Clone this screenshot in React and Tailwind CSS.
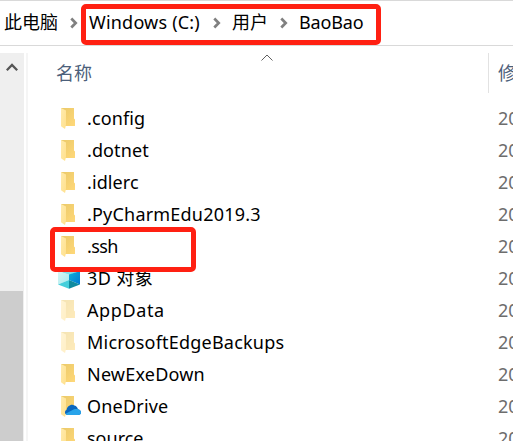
const FONT = "font-['Noto_Sans','Noto_Sans_CJK_SC',sans-serif]";

function Folder({ faded, cloud }) {
  return (
    <svg width="24" height="24" viewBox="0 0 24 24" className="shrink-0">
      <defs>
        <linearGradient id="back" x1="0" y1="0" x2="1" y2="1">
          <stop offset="0" stopColor="#eac969" />
          <stop offset="1" stopColor="#ffd879" />
        </linearGradient>
        <linearGradient id="front" x1="0" y1="0" x2="1" y2="1">
          <stop offset="0" stopColor="#ffebae" />
          <stop offset="1" stopColor="#ffe08c" />
        </linearGradient>
      </defs>
      <g opacity={faded ? 0.5 : 1}>
        <path d="M4 2H17V12.5L18 13.5V20H8L4 18Z" fill="url(#back)" />
        <path d="M4 2L9 4.5V19L8 23L4 20.3Z" fill="url(#front)" />
      </g>
      {cloud && (
        <g>
          <path d="M9.5 16C10 12.5 14 9.5 17.5 11.5C19.5 12 20.5 13.5 21 15.3C23 15.7 24 17 24 18.5C24 20 23 21 21 21H11C9 21 8 19.8 8 18.5C8 17.2 8.6 16.3 9.5 16Z" fill="#0a67bf" />
          <path d="M8.6 19.8L17 15.3C18.5 14.7 20 14.8 21 15.3C23 15.7 24 17 24 18.5C24 20 23 21 21 21H11C9.9 21 9.1 20.6 8.6 19.8Z" fill="#28a4ea" />
        </g>
      )}
    </svg>
  );
}

function Cube() {
  return (
    <svg width="24" height="24" viewBox="0 0 24 24" className="shrink-0">
      <defs>
        <linearGradient id="cubeRight" x1="0" y1="0" x2="1" y2="1">
          <stop offset="0" stopColor="#0fb2d8" />
          <stop offset="1" stopColor="#0078d4" />
        </linearGradient>
        <linearGradient id="cubeLeft" x1="0" y1="0" x2="1" y2="1">
          <stop offset="0" stopColor="#d8f7f5" />
          <stop offset="1" stopColor="#a5e9ee" />
        </linearGradient>
      </defs>
      <path d="M1 5L12 1L23 5L12 9Z" fill="#7fdfe8" />
      <path d="M1 5L12 8.5V14L1 18.5Z" fill="url(#cubeLeft)" />
      <path d="M12 8.5L23 5V18.5L12 14Z" fill="url(#cubeRight)" />
      <path d="M12 14L23 18.5L12 22.7Z" fill="#108b9f" />
      <path d="M12 14V22.7L1 18.5Z" fill="#45cfdb" />
    </svg>
  );
}

function Chevron() {
  return (
    <svg width="8" height="12" viewBox="0 0 8 12" className="shrink-0">
      <path d="M1.3 1.5L5.7 6L1.3 10.5" fill="none" stroke="#808080" strokeWidth="2.7" />
    </svg>
  );
}

const files = [
  { name: ".config", spacing: "tracking-[0.1px]" },
  { name: ".dotnet", spacing: "tracking-[0.1px]" },
  { name: ".idlerc", spacing: "tracking-[0.1px]" },
  { name: ".PyCharmEdu2019.3", spacing: "tracking-[0.2px]" },
  { name: ".ssh", spacing: "tracking-[-0.6px]" },
  { name: "3D 对象", spacing: "tracking-[0.4px]", kind: "cube" },
  { name: "AppData", spacing: "tracking-[0.6px]", kind: "faded" },
  { name: "MicrosoftEdgeBackups", spacing: "tracking-[0.22px]", kind: "faded" },
  { name: "NewExeDown", spacing: "tracking-[0.2px]" },
  { name: "OneDrive", spacing: "tracking-[0.2px]", kind: "cloud" },
  { name: "source", spacing: "tracking-[0px]" },
];

export default function App() {
  return (
    <div className={`relative flex h-[441px] w-[513px] flex-col overflow-hidden bg-white text-[18px] whitespace-nowrap text-black ${FONT}`}>
      <header className="flex h-[46px] shrink-0 items-center border-t border-b border-[#d9d9d9] pl-1">
        <span className="w-[66px] pb-0.5">此电脑</span>
        <Chevron />
        <span className="ml-[11px] w-[124px] pb-0.5 tracking-[0.2px]">Windows (C:)</span>
        <Chevron />
        <span className="ml-[11px] w-[48px] pb-0.5">用户</span>
        <Chevron />
        <span className="ml-[11px] pb-0.5 tracking-[-0.15px]">BaoBao</span>
      </header>

      <div className="flex min-h-0 flex-1">
        <aside className="mt-[7px] w-6 shrink-0 bg-[#efefef]">
          <div className="flex h-[238px] justify-center pt-[9px]">
            <svg width="12" height="10" viewBox="0 0 12 10">
              <path d="M0.8 8.3L6 3L11.2 8.3" fill="none" stroke="#555" strokeWidth="2.3" />
            </svg>
          </div>
          <div className="h-[150px] w-[23px] bg-[#cdcdcd]" />
        </aside>
        <div className="mt-[7px] ml-[2px] w-[2px] shrink-0 bg-[#f5f5f5]" />

        <main className="min-w-0 flex-1">
          <div className="flex h-14 pt-[7px] text-[#4c607a]">
            <div className="relative flex h-10 w-[461px] shrink-0 items-center border-r border-[#e2e2e2] pt-px pl-7">
              名称
              <svg width="12" height="7" viewBox="0 0 12 7" className="absolute top-px left-[233px]">
                <path d="M0.5 6.5L6 1L11.5 6.5" fill="none" stroke="#606060" strokeWidth="1" />
              </svg>
            </div>
            <span className="ml-[9px] flex h-10 items-center pt-px">修</span>
          </div>
          {files.map((f) => (
            <div key={f.name} className="flex h-8 items-center pl-[29px]">
              {f.kind === "cube" ? <Cube /> : <Folder faded={f.kind === "faded"} cloud={f.kind === "cloud"} />}
              <span className={`ml-[6px] w-[411px] shrink-0 ${f.spacing}`}>{f.name}</span>
              <span className="text-[#6d6d6d]">20</span>
            </div>
          ))}
        </main>
      </div>

      <div className="absolute top-1 left-[81px] h-[41px] w-[300px] rounded-[5px] border-5 border-[#ff2012]" />
      <div className="absolute top-[227px] left-[50px] h-[45px] w-[146px] rounded-[5px] border-5 border-[#ff2012]" />
    </div>
  );
}
